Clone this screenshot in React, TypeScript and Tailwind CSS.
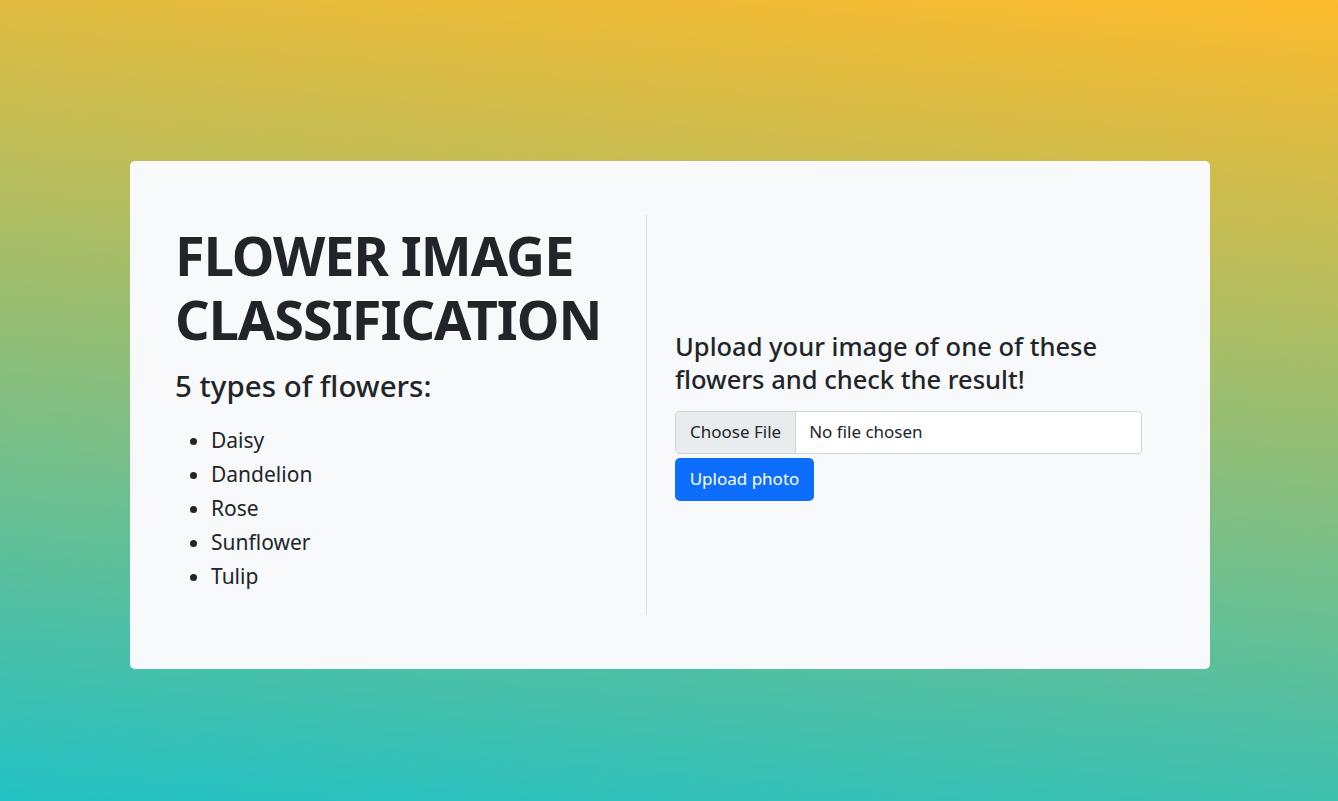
const flowers = ["Daisy", "Dandelion", "Rose", "Sunflower", "Tulip"];

export default function App() {
  return (
    <div className="h-[801px] w-full overflow-hidden bg-[linear-gradient(185deg,#fdbb2d_0%,#22c1c3_100%)] pt-[161px] font-['Noto_Sans','Open_Sans',sans-serif] text-[#212529]">
      <div className="ml-[130px] flex w-[1080px] rounded-[5px] bg-[#f8f9fa] px-[45px] py-[54px]">
        {/* left column: title + list */}
        <div className="w-[472px] border-r border-[#dee2e6] pb-[22px] pt-[8px]">
          <h1 className="text-[54px] font-bold leading-[64px] tracking-[-1px]">
            FLOWER IMAGE
            <br />
            CLASSIFICATION
          </h1>
          <h3 className="mt-[17px] text-[29.5px] font-medium leading-[36px]">5 types of flowers:</h3>
          <ul className="mt-[19px] list-disc pl-[36px] text-[21px] leading-[34px]">
            {flowers.map((f) => (
              <li key={f}>{f}</li>
            ))}
          </ul>
        </div>

        {/* right column: upload form */}
        <div className="flex flex-1 flex-col justify-center pl-[28px]">
          <h4 className="w-[470px] text-[25.5px] font-medium leading-[33px]">
            Upload your image of one of these flowers and check the result!
          </h4>
          <div className="mt-[15px] flex h-[43px] w-[467px] overflow-hidden rounded-[4px] border border-[#ced4da] bg-white text-[17px]">
            <span className="flex items-center border-r border-[#ced4da] bg-[#e9ecef] px-[14px]">Choose File</span>
            <span className="flex items-center px-[13px]">No file chosen</span>
          </div>
          <button className="mt-[4px] h-[43px] w-[139px] rounded-[5px] bg-[#0d6efd] text-[17px] text-white">
            Upload photo
          </button>
        </div>
      </div>
    </div>
  );
}
